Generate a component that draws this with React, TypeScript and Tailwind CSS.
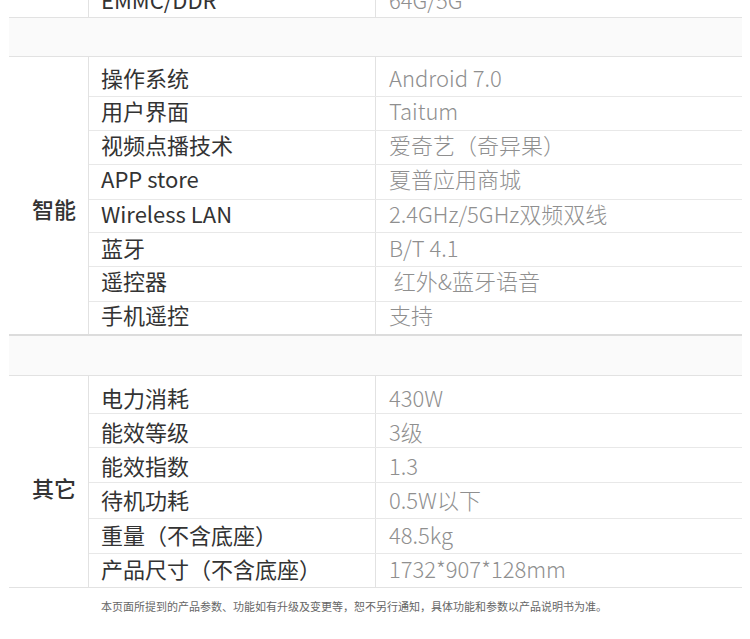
const FONT = "font-['Noto_Sans_CJK_SC','Noto_Sans',sans-serif]";

type Row = { label: string; value: string; h: number; pt?: number; pb?: number };

const smart: Row[] = [
  { label: "操作系统", value: "Android 7.0", h: 40, pt: 1 },
  { label: "用户界面", value: "Taitum", h: 34, pb: 7 },
  { label: "视频点播技术", value: "爱奇艺（奇异果）", h: 34, pb: 7 },
  { label: "APP store", value: "夏普应用商城", h: 35, pb: 9 },
  { label: "Wireless LAN", value: "2.4GHz/5GHz双频双线", h: 33, pb: 6 },
  { label: "蓝牙", value: "B/T 4.1", h: 34, pb: 6 },
  { label: "遥控器", value: "\u00a0红外&蓝牙语音", h: 35, pb: 8 },
  { label: "手机遥控", value: "支持", h: 32, pb: 9 },
];

const others: Row[] = [
  { label: "电力消耗", value: "430W", h: 38, pt: 4 },
  { label: "能效等级", value: "3级", h: 34, pt: 1 },
  { label: "能效指数", value: "1.3", h: 35 },
  { label: "待机功耗", value: "0.5W以下", h: 36, pb: 4 },
  { label: "重量（不含底座）", value: "48.5kg", h: 35, pb: 4 },
  { label: "产品尺寸（不含底座）", value: "1732*907*128mm", h: 33, pb: 6 },
];

function SpecRow({ row, last }: { row: Row; last: boolean }) {
  const pad = { paddingTop: row.pt ?? 0, paddingBottom: row.pb ?? 0 };
  return (
    <div
      className={`flex ${last ? "" : "border-b border-[#e8e8e8]"}`}
      style={{ height: row.h }}
    >
      <div
        className="w-[286px] flex items-center pl-[12px] text-[22px] text-[#333] leading-none"
        style={pad}
      >
        {row.label}
      </div>
      <div
        className="flex-1 flex items-center pl-[13px] text-[22px] text-[#8f8f8f] font-light leading-none border-l border-[#e2e2e2]"
        style={pad}
      >
        {row.value}
      </div>
    </div>
  );
}

function Section({
  title,
  rows,
  titlePad,
  bottom,
}: {
  title: string;
  rows: Row[];
  titlePad: number;
  bottom: string;
}) {
  return (
    <div className={`flex ${bottom}`}>
      <div
        className="w-[79px] flex justify-end items-center pr-[12px] text-[22px] font-medium text-[#333] leading-none"
        style={{ paddingTop: titlePad }}
      >
        {title}
      </div>
      <div className="flex-1 flex flex-col border-l border-[#e2e2e2]">
        {rows.map((r, i) => (
          <SpecRow key={r.label} row={r} last={i === rows.length - 1} />
        ))}
      </div>
    </div>
  );
}

export default function App() {
  return (
    <div className={`w-[750px] h-[639px] overflow-hidden bg-white ${FONT}`}>
      <div className="-mt-[19px] ml-[9px] w-[733px]">
        <div className="flex h-[37px] border-b border-[#e2e2e2]">
          <div className="w-[79px]" />
          <div className="flex-1 flex border-l border-[#e2e2e2]">
            <div className="w-[286px] flex items-center pl-[12px] text-[22px] text-[#333] leading-none">
              EMMC/DDR
            </div>
            <div className="flex-1 flex items-center pl-[13px] text-[22px] text-[#8f8f8f] font-light leading-none border-l border-[#e2e2e2]">
              64G/5G
            </div>
          </div>
        </div>
        <div className="h-[39px] bg-[#fafafa] border-b border-[#e2e2e2]" />
        <Section
          title="智能"
          rows={smart}
          titlePad={24}
          bottom="border-b-2 border-[#dcdcdc]"
        />
        <div className="h-[40px] bg-[#fafafa] border-b border-[#e2e2e2]" />
        <Section
          title="其它"
          rows={others}
          titlePad={10}
          bottom="border-b border-[#e2e2e2]"
        />
      </div>
      <p className="mt-[13px] ml-[101px] text-[11px] leading-none text-[#666]">
        本页面所提到的产品参数、功能如有升级及变更等，恕不另行通知，具体功能和参数以产品说明书为准。
      </p>
    </div>
  );
}
